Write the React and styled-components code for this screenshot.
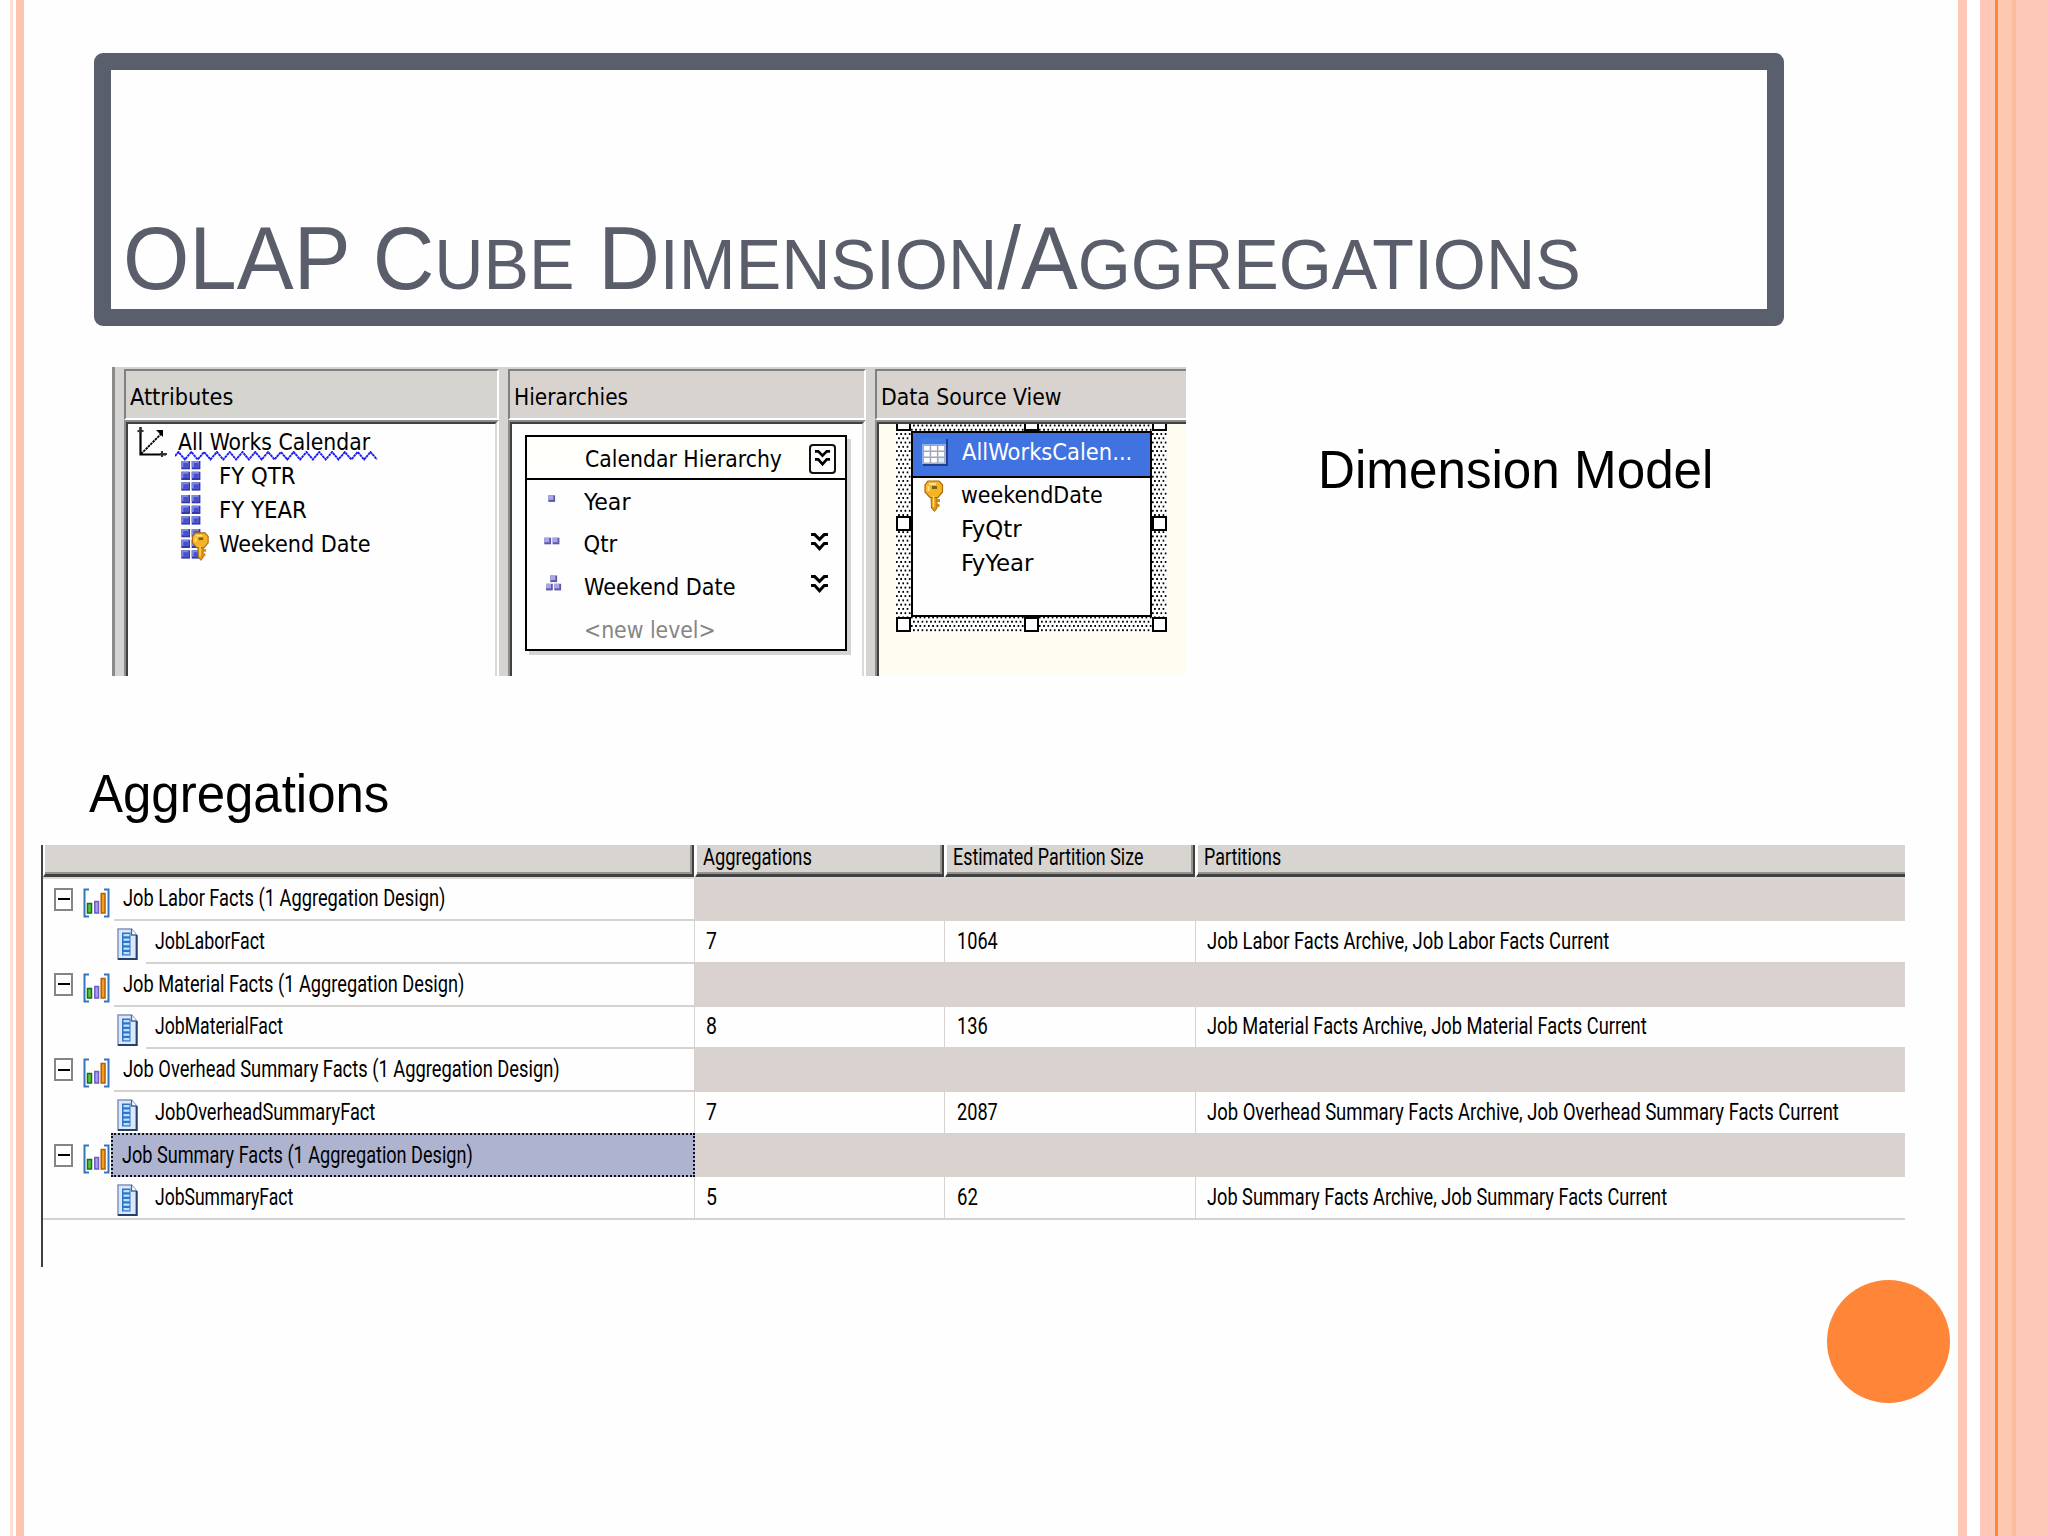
import React, { useLayoutEffect, useRef, useState } from 'react';
import styled, { createGlobalStyle } from 'styled-components';

const GlobalStyle = createGlobalStyle`
  * {
    box-sizing: border-box;
  }
  body {
    margin: 0;
    background: #fefefe;
    overflow: hidden;
  }
`;

const facts = [
  {
    group: 'Job Labor Facts (1 Aggregation Design)', groupWidth: 322,
    name: 'JobLaborFact', nameWidth: 110,
    count: '7', countWidth: 11, size: '1064', sizeWidth: 41,
    partitions: 'Job Labor Facts Archive, Job Labor Facts Current', partitionsWidth: 402,
  },
  {
    group: 'Job Material Facts (1 Aggregation Design)', groupWidth: 341,
    name: 'JobMaterialFact', nameWidth: 128,
    count: '8', countWidth: 11, size: '136', sizeWidth: 31,
    partitions: 'Job Material Facts Archive, Job Material Facts Current', partitionsWidth: 440,
  },
  {
    group: 'Job Overhead Summary Facts (1 Aggregation Design)', groupWidth: 437,
    name: 'JobOverheadSummaryFact', nameWidth: 220,
    count: '7', countWidth: 11, size: '2087', sizeWidth: 41,
    partitions: 'Job Overhead Summary Facts Archive, Job Overhead Summary Facts Current', partitionsWidth: 632,
  },
  {
    group: 'Job Summary Facts (1 Aggregation Design)', groupWidth: 351,
    name: 'JobSummaryFact', nameWidth: 138,
    count: '5', countWidth: 11, size: '62', sizeWidth: 21,
    partitions: 'Job Summary Facts Archive, Job Summary Facts Current', partitionsWidth: 460,
    selected: true,
  },
];

// Squeezes or stretches a line of text to the given width
function Fit({ width, children }) {
  const ref = useRef(null);
  const [scale, setScale] = useState(1);

  useLayoutEffect(() => {
    setScale(width / ref.current.offsetWidth);
  }, [width, children]);

  return (
    <FitBox $width={width}>
      <FitText ref={ref} style={{ transform: `scaleX(${scale})` }}>{children}</FitText>
    </FitBox>
  );
}

const FitBox = styled.span`
  display: block;
  flex: none;
  width: ${(p) => p.$width}px;
  white-space: nowrap;
`;

const FitText = styled.span`
  display: inline-block;
  transform-origin: 0 50%;
`;

/* ---------- slide ---------- */

const Slide = styled.div`
  display: flex;
  width: 2048px;
  height: 1536px;
  background: #fefefe;
  overflow: hidden;
`;

const Stripe = styled.div`
  flex: none;
  width: ${(p) => p.$w}px;
  background: ${(p) => p.$c || '#ffffff'};
`;

const Content = styled.main`
  flex: 1;
  min-width: 0;
  display: flex;
  flex-direction: column;
  align-items: flex-start;
`;

const TitleBox = styled.header`
  display: flex;
  align-items: flex-end;
  flex: none;
  width: 1689.5px;
  height: 273px;
  margin: 53px 0 0 70px;
  padding: 0 0 6px 12px;
  border: 17px solid #595f6c;
  border-radius: 9px;
`;

const Title = styled.h1`
  margin: 0;
  font: 400 88.5px/1 'Liberation Sans', Arial, sans-serif;
  color: #5a5e6b;
`;

const Small = styled.span`
  font-size: 0.8em;
`;

const Label = styled.h2`
  margin: 0;
  font: 400 53px/60px 'Liberation Sans', Arial, sans-serif;
  color: #000;
`;

const DimensionLabel = styled(Label)`
  margin: 73px 0 0 131.5px;
`;

const AggregationLabel = styled(Label)`
  margin: 87.5px 0 21.5px 64.5px;
`;

const Circle = styled.div`
  width: 123px;
  height: 123px;
  margin: 13px 0 0 1803px;
  border-radius: 50%;
  background: #ff8638;
`;

/* ---------- dimension designer ---------- */

const DimensionBand = styled.section`
  display: flex;
  align-items: flex-start;
  flex: none;
  height: 309px;
  margin: 41px 0 0 88px;
`;

const Designer = styled.div`
  display: flex;
  width: 1074px;
  height: 309px;
  background: #d6d4d2;
  padding-top: 2px;
  font: 400 23.5px/34px 'DejaVu Sans Condensed', 'DejaVu Sans', sans-serif;
  font-stretch: condensed;
  color: #000;
`;

const Edge = styled.div`
  width: 12px;
  margin-top: -2px;
  border-left: 3px solid #8a8a8a;
`;

const Pane = styled.div`
  display: flex;
  flex-direction: column;
  flex: none;
  width: ${(p) => p.$w}px;
  margin-right: ${(p) => (p.$last ? 0 : 9)}px;
`;

const PaneHeader = styled.div`
  display: flex;
  align-items: center;
  height: 51px;
  padding: 5px 0 0 4px;
  background: ${(p) => p.$bg || '#d9d3d0'};
  border: 2px solid #808080;
  border-right: ${(p) => (p.$last ? '0' : '2px solid #fff')};
  border-bottom-color: #fff;
`;

const PaneBody = styled.div`
  flex: 1;
  display: flex;
  border: 2px solid #8c8c8c;
  border-right: ${(p) => (p.$last ? '0' : '2px solid #fff')};
  border-bottom: 0;
`;

const PaneInner = styled.div`
  flex: 1;
  min-width: 0;
  border: 2px solid #404040;
  border-right: ${(p) => (p.$last ? '0' : '2px solid #dcdad8')};
  border-bottom: 0;
  background: ${(p) => p.$bg || '#fefefe'};
  overflow: hidden;
`;

const TreeRow = styled.div`
  display: flex;
  align-items: center;
  height: 34px;
  padding-left: ${(p) => (p.$root ? 7.5 : 53)}px;
  gap: ${(p) => (p.$root ? 10.5 : 9)}px;

  &:first-child {
    margin-top: 1px;
  }
`;

const Flagged = styled.div`
  position: relative;

  svg {
    position: absolute;
    left: -3px;
    top: 26px;
  }
`;

const Card = styled.div`
  width: 322px;
  height: 216px;
  margin: 11px 0 0 13px;
  border: 2px solid #000;
  background: #fefefe;
  box-shadow: 4px 4px 0 #d4d4d4;
`;

const CardHeader = styled.div`
  display: flex;
  align-items: center;
  height: 43px;
  padding: 3px 9px 0 57.5px;
  border-bottom: 2px solid #000;
  background: #fffffb;
`;

const ExpandButton = styled.button`
  display: flex;
  align-items: center;
  justify-content: center;
  width: 27px;
  height: 30px;
  margin: 0 0 1px auto;
  padding: 0;
  border: 2px solid #111;
  border-radius: 4px;
  background: #fff;
`;

const Level = styled.div`
  display: flex;
  align-items: center;
  height: 42.6px;
  padding: 1px 16px 0 0;
  color: ${(p) => (p.$muted ? '#858585' : '#000')};

  > svg:first-child {
    flex: none;
    margin-top: -1px;
  }
  > svg:last-child:not(:first-child) {
    margin: 0 0 4px auto;
  }
`;

// Staggered dots around the selected table
const Selection = styled.div`
  position: relative;
  width: 271px;
  height: 216px;
  margin: -8px 0 0 17px;
  padding: 15px;
  background-color: #fff;
  background-image:
    conic-gradient(at 1.9px 2px, transparent 75%, #000 0),
    conic-gradient(at 1.9px 2px, transparent 75%, #000 0);
  background-size: 4.27px 8.54px;
  background-position: 0 0, 2.13px 4.27px;
`;

const Handle = styled.i`
  position: absolute;
  left: ${(p) => p.$x}px;
  top: ${(p) => p.$y}px;
  width: 15px;
  height: 15px;
  border: 2px solid #000;
  background: #fff;
`;

const TableBox = styled.div`
  height: 186px;
  border: 2.5px solid #000;
  background: #fefefe;
`;

const TableTitle = styled.div`
  display: flex;
  align-items: center;
  height: 44.5px;
  padding: 0 0 4px 9px;
  gap: 13.5px;
  border-bottom: 2px solid #000;
  background: #4072e0;
  color: #fff;
`;

const Column = styled.div`
  display: flex;
  align-items: center;
  height: 34px;
  padding-left: 10.5px;

  > svg {
    flex: none;
  }
`;

const IconSlot = styled.div`
  display: flex;
  width: 37px;
  margin-top: 3px;
`;

/* ---------- aggregation grid ---------- */

const Grid = styled.section`
  flex: none;
  width: 1863.5px;
  height: 421.7px;
  margin-left: 17px;
  border-left: 2px solid #404040;
  font: 400 23px/26px Roboto, 'DejaVu Sans Condensed', sans-serif;
  color: #000;
`;

const GridRow = styled.div`
  display: grid;
  grid-template-columns: 651.5px 250.5px 251px 1fr;
  grid-template-rows: 100%;
  height: ${(p) => (p.$head ? 32 : 42.67)}px;
  margin-bottom: ${(p) => (p.$head ? 1.65 : 0)}px;
  box-shadow: ${(p) => (p.$head ? '0 2px 0 #dcd8d5' : 'none')};
`;

const HeadCell = styled.div`
  display: flex;
  align-items: center;
  margin-right: ${(p) => (p.$last ? 0 : 1)}px;
  padding: 0 0 3px 6px;
  background: #d8d4d0;
  border-left: 2px solid #fff;
  border-right: ${(p) => (p.$last ? '0' : '2px solid #404040')};
  border-bottom: 3px solid #404040;
  box-shadow: inset ${(p) => (p.$last ? 0 : -2)}px -2px 0 #96928f;
`;

const Cell = styled.div`
  display: flex;
  align-items: center;
  padding-top: 1px;
  padding-left: ${(p) => p.$pad || 0}px;
  border-bottom: 2px solid #d6d2d0;
  border-right: ${(p) => (p.$last ? '0' : '1.5px solid #d6d2d0')};
`;

const EmptyCell = styled.div`
  grid-column: span 3;
  background: #dad2cf;
`;

const TreeCell = styled.div`
  display: flex;
  align-items: flex-start;
  padding-left: ${(p) => (p.$item ? 74 : 11)}px;
  border-right: 1.5px solid #d6d2d0;
  ${(p) => p.$lastRow && 'border-bottom: 2px solid #d6d2d0;'}
`;

const TreeLabel = styled.div`
  display: flex;
  align-items: center;
  flex: 1;
  height: ${(p) => (p.$lastRow ? 40.67 : 42.67)}px;
  margin-left: ${(p) => p.$gap}px;
  padding-top: 1px;
  padding-left: ${(p) => p.$pad}px;
  border-bottom: ${(p) => (p.$lastRow ? 0 : 2)}px solid #d6d2d0;
`;

const SelectedLabel = styled(TreeLabel)`
  height: 44px;
  margin-top: -1.5px;
  margin-right: -1px;
  margin-left: 1px;
  padding-left: 9px;
  border: 2px dotted #10101c;
  background: #aeb3d0;
`;

const Toggle = styled.button`
  display: flex;
  align-items: center;
  justify-content: center;
  width: 19px;
  height: 23px;
  margin: 9px 10px 0 0;
  padding: 0;
  border: 2px solid #858585;
  background: #fff;

  &::before {
    content: '';
    width: 12px;
    height: 2px;
    background: #000;
  }
`;

const RowIcon = styled.span`
  display: flex;
  flex: none;
  margin-top: ${(p) => p.$top}px;
`;

/* ---------- icons ---------- */

const AxisIcon = () => (
  <svg width="32" height="34" viewBox="0 0 32 34" fill="none" stroke="#000">
    <path d="M4.5 2v27.5H30" strokeWidth="2.2" />
    <path d="M5 29L26 8" strokeWidth="1.8" strokeDasharray="2.6 0.7" />
    <path d="M20 5h7v7z" fill="#000" stroke="none" />
    <path d="M1.5 6h6M4.5 2v6M26 26v6M24 29h7" stroke="#333" strokeWidth="2" />
  </svg>
);

const KeyShape = () => (
  <g>
    <path d="M7 17h6v11l-2.5 3.5L7.5 28z" fill="#e39a10" stroke="#a8690c" strokeWidth="1" />
    <path d="M13 19h3v3h-3zM13 24h2.5v3H13z" fill="#d48a0c" />
    <path d="M4 1h11l3.5 4v7L14 17.5H6L1 12V5z" fill="#f3b526" stroke="#a8690c" strokeWidth="1.2" />
    <path d="M5 3h7v2H5zM3.5 6h2v5h-2z" fill="#ffe58c" />
    <path d="M8 6h5v3H8z" fill="#8a5a17" />
    <path d="M9.5 16v11" stroke="#ffdf6b" strokeWidth="1.5" />
  </g>
);

const KeyIcon = () => (
  <svg width="20" height="33" viewBox="0 0 20 33"><KeyShape /></svg>
);

const AttributeIcon = ({ isKey }) => (
  <svg width="28.5" height="32" viewBox="0 0 28.5 32" overflow="visible">
    {[0, 10.7, 21.3].map((y) =>
      [0.3, 10.7].map((x) => (
        <g key={`${x}-${y}`}>
          <rect x={x} y={y + 1} width="8.7" height="8.3" fill="#3438a8" />
          <rect x={x} y={y + 1} width="7.2" height="6.3" fill="#7d86e0" />
          <rect x={x + 2} y={y + 3} width="5" height="4.3" fill="#484fcf" />
        </g>
      ))
    )}
    {isKey && <g transform="translate(10.5 4) scale(0.9)"><KeyShape /></g>}
  </svg>
);

const levelSquares = {
  year: [[21.3, 15.3]],
  qtr: [[17.3, 14.7], [25.6, 14.7]],
  date: [[23.3, 10.5], [19, 18.8], [27.3, 18.8]],
  none: [],
};

const LevelIcon = ({ kind }) => (
  <svg width="56.5" height="42.6" viewBox="0 0 56.5 42.6">
    {levelSquares[kind].map(([x, y]) => (
      <g key={`${x}-${y}`}>
        <rect x={x} y={y} width="6.8" height="6.6" fill="#5d58a8" />
        <rect x={x} y={y} width="5" height="4.6" fill="#a9a5e6" />
      </g>
    ))}
  </svg>
);

const Chevrons = ({ size = 19 }) => (
  <svg width={size} height={size} viewBox="0 0 18 18" fill="none" stroke="#000" strokeWidth="2.8">
    <path d="M1 1.5h3.5L9 6l4.5-4.5H17M1 10h3.5L9 15l4.5-5H17" />
  </svg>
);

const Squiggle = () => (
  <svg width="204" height="11" viewBox="0 0 204 11" fill="none" stroke="#1c1cf0" strokeWidth="1.9">
    <path
      strokeDasharray="2.7 0.5"
      d={'M0 5L3.5 1' + Array.from({ length: 15 }, (_, i) => `L${9.9 + i * 12.8} 8.5L${16.3 + i * 12.8} 1`).join('') + 'L202 8.5'}
    />
  </svg>
);

const TableIcon = () => (
  <svg width="26" height="28" viewBox="0 0 26 28">
    <rect x="1" y="1" width="25" height="27" fill="#1f3f94" />
    <rect width="24" height="26" fill="#8fb0ea" />
    <rect width="24" height="6" fill="#3f7be0" />
    <rect x="1" y="7" width="22" height="18" fill="#a3a5bd" />
    {[0, 1, 2].map((r) =>
      [0, 1, 2].map((c) => (
        <rect key={`${r}${c}`} x={2 + c * 7.2} y={8 + r * 6} width="5.7" height="4.5" fill={r + c > 3 ? '#d5efff' : '#ffffff'} />
      ))
    )}
  </svg>
);

const DesignIcon = () => (
  <svg width="27" height="30" viewBox="0 0 27 30">
    <path d="M6 1.5H1.5v27H6M21 1.5h4.5v27H21" fill="none" stroke="#3474bd" strokeWidth="2" />
    <rect x="4.5" y="15.5" width="4" height="9.5" fill="#56c43e" stroke="#15700f" strokeWidth="1.5" />
    <rect x="11.8" y="13.5" width="3.7" height="11.5" fill="#aaa2f2" stroke="#6a5cc2" strokeWidth="1.5" />
    <rect x="18.2" y="5.5" width="3.8" height="19.5" fill="#f79a20" stroke="#b0600a" strokeWidth="1.5" />
  </svg>
);

const DocIcon = () => (
  <svg width="21" height="32" viewBox="0 0 21 32">
    <path d="M1 1h13.5l5 6v24H1z" fill="#dce8f8" stroke="#7f93c0" strokeWidth="1.5" />
    <path d="M14.5 1v6h5" fill="#fff" stroke="#4c659c" strokeWidth="1.3" />
    <path d="M19.7 7v24H1" fill="none" stroke="#24406f" strokeWidth="2" />
    <rect x="5" y="4.5" width="8.5" height="23" fill="#3173c8" />
    {[6, 10.5, 15, 19.5, 24].map((y) => (
      <rect key={y} x="6.5" y={y} width="6" height="2.3" fill="#b5e2ff" />
    ))}
  </svg>
);

/* ---------- sections ---------- */

function AttributesPane() {
  return (
    <Pane $w={375}>
      <PaneHeader $bg="#d6d4cf"><Fit width={103}>Attributes</Fit></PaneHeader>
      <PaneBody>
        <PaneInner>
          <TreeRow $root>
            <AxisIcon />
            <Flagged>
              <Fit width={192}>All Works Calendar</Fit>
              <Squiggle />
            </Flagged>
          </TreeRow>
          <TreeRow><AttributeIcon /><Fit width={76.5}>FY QTR</Fit></TreeRow>
          <TreeRow><AttributeIcon /><Fit width={87.5}>FY YEAR</Fit></TreeRow>
          <TreeRow><AttributeIcon isKey /><Fit width={151.5}>Weekend Date</Fit></TreeRow>
        </PaneInner>
      </PaneBody>
    </Pane>
  );
}

function HierarchiesPane() {
  return (
    <Pane $w={358}>
      <PaneHeader><Fit width={114.5}>Hierarchies</Fit></PaneHeader>
      <PaneBody>
        <PaneInner>
          <Card>
            <CardHeader>
              <Fit width={197}>Calendar Hierarchy</Fit>
              <ExpandButton><Chevrons size={17} /></ExpandButton>
            </CardHeader>
            <Level><LevelIcon kind="year" /><Fit width={46}>Year</Fit></Level>
            <Level><LevelIcon kind="qtr" /><Fit width={34}>Qtr</Fit><Chevrons /></Level>
            <Level><LevelIcon kind="date" /><Fit width={151.5}>Weekend Date</Fit><Chevrons /></Level>
            <Level $muted><LevelIcon kind="none" /><Fit width={131.5}>&lt;new level&gt;</Fit></Level>
          </Card>
        </PaneInner>
      </PaneBody>
    </Pane>
  );
}

function SourcePane() {
  return (
    <Pane $w={311} $last>
      <PaneHeader $last><Fit width={181}>Data Source View</Fit></PaneHeader>
      <PaneBody $last>
        <PaneInner $last $bg="#fffcf2">
          <Selection>
            <TableBox>
              <TableTitle><TableIcon /><Fit width={170.5}>AllWorksCalen...</Fit></TableTitle>
              <Column><IconSlot><KeyIcon /></IconSlot><Fit width={141.5}>weekendDate</Fit></Column>
              <Column><IconSlot /><Fit width={60.5}>FyQtr</Fit></Column>
              <Column><IconSlot /><Fit width={72.5}>FyYear</Fit></Column>
            </TableBox>
            {[0, 100, 201].map((y) =>
              [0, 128, 256].map((x) => (x === 128 && y === 100 ? null : <Handle key={`${x}-${y}`} $x={x} $y={y} />))
            )}
          </Selection>
        </PaneInner>
      </PaneBody>
    </Pane>
  );
}

function AggregationGrid() {
  return (
    <Grid>
      <GridRow $head>
        <HeadCell />
        <HeadCell><Fit width={109}>Aggregations</Fit></HeadCell>
        <HeadCell><Fit width={190.5}>Estimated Partition Size</Fit></HeadCell>
        <HeadCell $last><Fit width={77}>Partitions</Fit></HeadCell>
      </GridRow>
      {facts.map((fact, i) => {
        const lastRow = i === facts.length - 1;
        const GroupLabel = fact.selected ? SelectedLabel : TreeLabel;
        return (
          <React.Fragment key={fact.name}>
            <GridRow>
              <TreeCell>
                <Toggle />
                <RowIcon $top={9}><DesignIcon /></RowIcon>
                <GroupLabel $gap={4} $pad={8.5}><Fit width={fact.groupWidth}>{fact.group}</Fit></GroupLabel>
              </TreeCell>
              <EmptyCell />
            </GridRow>
            <GridRow>
              <TreeCell $item $lastRow={lastRow}>
                <RowIcon $top={7}><DocIcon /></RowIcon>
                <TreeLabel $gap={8} $pad={9} $lastRow={lastRow}><Fit width={fact.nameWidth}>{fact.name}</Fit></TreeLabel>
              </TreeCell>
              <Cell $pad={11.5}><Fit width={fact.countWidth}>{fact.count}</Fit></Cell>
              <Cell $pad={12}><Fit width={fact.sizeWidth}>{fact.size}</Fit></Cell>
              <Cell $pad={11} $last><Fit width={fact.partitionsWidth}>{fact.partitions}</Fit></Cell>
            </GridRow>
          </React.Fragment>
        );
      })}
    </Grid>
  );
}

export default function App() {
  return (
    <Slide>
      <GlobalStyle />
      <Stripe $w={10} />
      <Stripe $w={3} $c="#fde0d4" />
      <Stripe $w={3} />
      <Stripe $w={8} $c="#fdc5b0" />
      <Content>
        <TitleBox>
          <Title>
            <Fit width={1458}>
              OLAP C<Small>UBE</Small> D<Small>IMENSION</Small>/A<Small>GGREGATIONS</Small>
            </Fit>
          </Title>
        </TitleBox>
        <DimensionBand>
          <Designer>
            <Edge />
            <AttributesPane />
            <HierarchiesPane />
            <SourcePane />
          </Designer>
          <DimensionLabel><Fit width={395}>Dimension Model</Fit></DimensionLabel>
        </DimensionBand>
        <AggregationLabel><Fit width={300}>Aggregations</Fit></AggregationLabel>
        <AggregationGrid />
        <Circle />
      </Content>
      <Stripe $w={9} $c="#fdc8b7" />
      <Stripe $w={12.5} />
      <Stripe $w={15.5} $c="#fdc8b7" />
      <Stripe $w={3} $c="#ff8638" />
      <Stripe $w={14} $c="#fdc7b0" />
      <Stripe $w={4} $c="#fdbb9f" />
      <Stripe $w={32} $c="#fdc8b7" />
    </Slide>
  );
}
